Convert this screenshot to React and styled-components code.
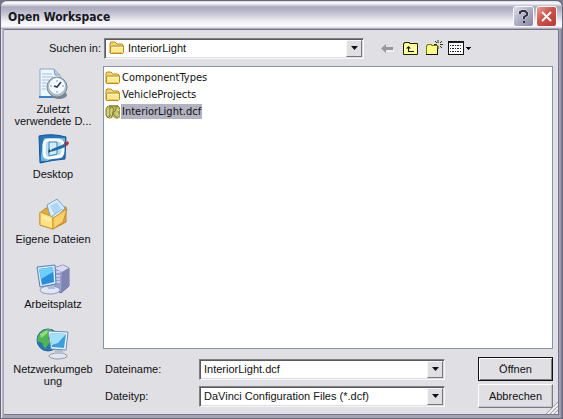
import React from "react";
import styled, { createGlobalStyle } from "styled-components";

const GlobalStyle = createGlobalStyle`
  *, *::before, *::after { box-sizing: border-box; }
  body { margin: 0; background: #77768a; }
  button, input, select { font: inherit; color: inherit; margin: 0; }
`;

const Dialog = styled.main`
  display: flex;
  flex-direction: column;
  min-height: 100vh;
  padding: 0 3px 3px;
  border: 1px solid #696879;
  border-radius: 7px 7px 0 0;
  background: linear-gradient(90deg, #f4f4f8 0, #a5a4b7 2px, #a5a4b7 calc(100% - 2px), #77768c 100%);
  font: 11px/13px "Liberation Sans", Arial, sans-serif;
  color: #111;
`;

const TitleBar = styled.header`
  display: flex;
  align-items: center;
  gap: 2px;
  height: 28px;
  margin: 0 -3px;
  padding: 5px 5px 2px 7px;
  border-radius: 6px 6px 0 0;
  background: linear-gradient(#d5d5df 0, #ffffff 2px, #d4d4df 4px, #aaa9bd 6px, #b5b4c6 9px, #cdccd9 14px, #eeeef4 20px, #fdfdff 25px, #d0cfdc 27px, #8b8a9d 28px);
`;

const Title = styled.h1`
  flex: 1;
  margin: 0;
  font: bold 12px/16px "DejaVu Sans Condensed", "DejaVu Sans", sans-serif;
  font-stretch: condensed;
  color: #17171f;
`;

const CaptionButton = styled.button`
  display: grid;
  place-items: center;
  width: 21px;
  height: 21px;
  padding: 0;
  border: 1px solid #f8f8ff;
  border-radius: 3px;
  background: ${(p) =>
    p.$close
      ? "linear-gradient(135deg, #e9a198, #cf5148 45%, #b93834)"
      : "linear-gradient(135deg, #dddde9, #a9a9c0 55%, #8787a3)"};
`;

const Body = styled.form`
  flex: 1;
  display: grid;
  grid-template-columns: 99px minmax(0, 1fr);
  grid-template-rows: 36px minmax(0, 1fr) auto;
  position: relative;
  padding-right: 5px;
  border: 1px solid #777689;
  border-width: 1px 1px 1px 0;
  background: #e0dfe4;
`;

const Lookup = styled.div`
  grid-column: 1 / -1;
  display: flex;
  align-items: center;
  padding-left: 45px;
`;

const LookupLabel = styled.label`
  flex: none;
  width: 55px;
`;

const Combo = styled.div`
  display: flex;
  align-items: center;
  flex: 1;
  position: relative;
  min-width: 0;
  max-width: ${(p) => p.$max || "none"};
  height: 21px;
  border: 1px solid;
  border-color: #807f88 #f8f8fa #f8f8fa #807f88;
  box-shadow: inset 1px 1px #5a5960, inset -1px -1px #dddce2;
  background: #fff;
`;

const ComboIcon = styled.span`
  position: absolute;
  left: 4px;
  top: 1px;
  width: 16px;
  height: 16px;
  pointer-events: none;
`;

const Select = styled.select`
  appearance: none;
  flex: 1;
  min-width: 0;
  height: 17px;
  padding: 0 20px 0 ${(p) => (p.$icon ? "23px" : "4px")};
  border: 0;
  background: transparent;
  outline: 0;
`;

const Input = styled.input`
  flex: 1;
  min-width: 0;
  height: 17px;
  padding: 0 4px;
  border: 0;
  background: transparent;
  outline: 0;
`;

const DropFace = styled.span`
  position: absolute;
  right: 1px;
  top: 1px;
  display: grid;
  place-items: center;
  width: 16px;
  height: 17px;
  padding: 0;
  border: 1px solid;
  border-color: #f7f7fa #77767d #77767d #f7f7fa;
  background: #e0dfe4;
  pointer-events: none;
`;

const DropButton = styled(DropFace)`
  pointer-events: auto;
`;

const Tools = styled.div`
  display: flex;
  align-items: center;
  gap: 2px;
  margin-left: 13px;
`;

const ToolButton = styled.button`
  display: grid;
  place-items: center;
  width: ${(p) => (p.$wide ? "28px" : "21px")};
  height: 20px;
  padding: 0;
  border: 0;
  background: none;
`;

const Places = styled.nav`
  grid-row: 2 / 4;
  display: flex;
  flex-direction: column;
  padding: 2px 5px 0 4px;
`;

const Place = styled.button`
  display: flex;
  flex-direction: column;
  align-items: center;
  gap: 3px;
  height: 65px;
  padding: 0;
  border: 0;
  background: none;
  line-height: 12px;
  text-align: center;
`;

const PlaceLabel = styled.span`
  white-space: pre-line;
`;

const FileList = styled.ul`
  margin: 0;
  padding: 2px 1px;
  list-style: none;
  border: 1px solid #8296a8;
  background: #fff;
`;

const FileRow = styled.li`
  display: flex;
  height: 17px;
`;

const FileButton = styled.button`
  display: flex;
  align-items: center;
  padding: 0;
  border: 0;
  background: none;
  font: 11px/15px "DejaVu Sans Condensed", "DejaVu Sans", sans-serif;
  font-stretch: condensed;
`;

const FileName = styled.span`
  padding: 0 1px;
  background: ${(p) => (p.$selected ? "#b3b2c1" : "transparent")};
`;

const Fields = styled.div`
  display: grid;
  grid-template-columns: 96px minmax(0, 1fr) 75px;
  grid-auto-rows: 22px;
  row-gap: 5px;
  align-items: center;
  padding: 9px 0 7px;
`;

const FieldLabel = styled.label`
  padding-left: 2px;
`;

const ActionButton = styled.button`
  height: 24px;
  padding: 0;
  border: 1px solid;
  border-color: ${(p) => (p.$primary ? "#111" : "#fff #7b7a82 #7b7a82 #fff")};
  box-shadow: ${(p) => (p.$primary ? "inset 1px 1px #fff, inset -1px -1px #7b7a82" : "inset -1px -1px #c3c2ca")};
  background: #e0dfe4;
`;

const FieldCombo = styled(Combo)`
  margin-right: 33px;
`;

const Grip = styled.svg`
  position: absolute;
  right: 0;
  bottom: 0;
`;

const FolderIcon = () => (
  <svg width="16" height="16" viewBox="0 0 16 16" aria-hidden="true">
    <path d="M1 13V3l1-1h4l2 2h5l1 1v2" fill="#f3d46e" stroke="#b78c20" />
    <path d="M1.500 13.500V7l1-1h12v6.500l-1 1z" fill="#ffe98d" stroke="#b98d20" />
    <path d="M3 7.500h11" stroke="#fff9c8" />
    <path d="M3 12.500h10" stroke="#eec85b" />
  </svg>
);

const ConfigIcon = () => (
  <svg width="16" height="16" viewBox="0 0 16 16" aria-hidden="true">
    <path d="M4 1h8l3 3v10l-4 1-3-2-3 2-4-2V4z" fill="#c6c16c" />
    <path d="M3 2 1 5v6l2 3M5 2v10l-2 2M6 3c3 0 3 3 2 5s2 5 5 6M13 2c-4 1-1 4-3 5s-2 4-4 7M4 2h9l2 3M14 6v7" fill="none" stroke="#77762a" />
    <path d="M3 5v6M6 5v6m6-6 2 2m-2 2 2 3" stroke="#e6e28a" />
  </svg>
);

const Arrow = () => (
  <svg width="7" height="4" viewBox="0 0 7 4" aria-hidden="true">
    <path d="M0 0h7L3.500 4z" fill="#111" />
  </svg>
);

const RecentIcon = () => (
  <svg width="32" height="32" viewBox="0 0 32 32" aria-hidden="true">
    <path d="M3 1h14l6 6v22H3z" fill="#eef6ff" stroke="#8aa7cf" />
    <path d="m17 1 1 6h5" fill="#b4cceb" stroke="#7d9dc5" />
    <path d="M5 6h10M5 9h11M5 12h7M5 15h5M5 18h4M5 21h4" stroke="#a6bddb" />
    <path d="M2 28h21v2H2z" fill="#3a82c7" />
    <ellipse cx="22" cy="27" rx="8" ry="4" fill="#788497" />
    <circle cx="20" cy="19" r="10" fill="#a9bdcd" stroke="#718799" />
    <circle cx="20" cy="18" r="7.500" fill="#f4faff" stroke="#fff" />
    <path d="M20 12v2m0 9v2m-7-7h2m10 0h2" stroke="#7899b1" />
    <path d="m17 18 3 1 4-5" fill="none" stroke="#233c54" strokeWidth="1.500" />
  </svg>
);

const DesktopIcon = () => (
  <svg width="32" height="32" viewBox="0 0 32 32" aria-hidden="true">
    <path d="M2 3q13-3 27 1l-1 22q-13 1-25 4z" fill="#2676b8" stroke="#16569b" />
    <path d="M4 23 7 5h21v4L11 28H4z" fill="#65b5e6" />
    <path d="M11 7h9q6 0 6 5v6q0 6-6 6l-8 1q-5 0-5-5v-8q0-5 4-5z" fill="#b9dff5" stroke="#fff" strokeWidth="3" />
    <path d="M12 9h8v12l-8 2z" fill="#d5edfa" stroke="#3785b6" />
    <path d="m15 16 10-4 5-3 1 3-5 3-9 3-4 1z" fill="#286da0" />
    <path d="m27 10 4-2 1 3-4 2z" fill="#a73542" />
    <path d="m14 18-3 2 1-4z" fill="#173f69" />
  </svg>
);

const DocumentsIcon = () => (
  <svg width="32" height="32" viewBox="0 0 32 32" aria-hidden="true">
    <path d="m3 15 6-5 20-1v15L16 31 3 27z" fill="#e1ac36" stroke="#bf8421" />
    <path d="m10 7 10-6 8 9-13 15z" fill="#d8edff" stroke="#75a3ce" />
    <path d="m13 8 7-4 4 6-7 6z" fill="#afd7f5" />
    <path d="M15 18l10-7" stroke="#7eabcf" />
    <path d="m3 14 13 5v12L3 27z" fill="#ffe484" stroke="#c99830" />
    <path d="m16 20 14-9-4 13-10 7z" fill="#f9d06a" stroke="#c8922e" />
    <path d="m5 17 9 4v3l-9-4z" fill="#fff4be" opacity=".7" />
  </svg>
);

const ComputerIcon = () => (
  <svg width="34" height="32" viewBox="0 0 34 32" aria-hidden="true">
    <path d="m18 5 9-3 6 3v18l-8 7-7-4z" fill="#9aa0ce" stroke="#646999" />
    <path d="m27 2 6 3-7 4-8-4z" fill="#d8daf0" />
    <path d="m26 9 7-4v18l-8 7z" fill="#7f84b2" />
    <path d="M20 9h4m-4 4h4m-4 3h4m-4 3h4" stroke="#f6f6ff" />
    <ellipse cx="14" cy="27" rx="10" ry="4" fill="#dfe6f5" stroke="#8d9bbb" />
    <path d="m10 20 8-1 1 7h-7z" fill="#adbbd9" />
    <path d="m1 4 18-2 1 19-16 3z" fill="#d8edff" stroke="#597db3" />
    <path d="m3 6 14-2 1 15-12 3z" fill="#278ddc" />
    <path d="m3 6 14-2v5L5 16z" fill="#72cdfa" />
  </svg>
);

const NetworkIcon = () => (
  <svg width="34" height="32" viewBox="0 0 34 32" aria-hidden="true">
    <circle cx="12" cy="12" r="11" fill="#2675b4" stroke="#2567a0" />
    <path d="M2 8q5-8 13-7l2 4-5 5 2 4-5 7-3-6-5-2z" fill="#4fb553" />
    <path d="m4 6 7-4 2 2-5 4-3 2z" fill="#9bd873" />
    <ellipse cx="22" cy="28" rx="9" ry="3" fill="#e1e5ee" stroke="#9299a8" />
    <path d="m18 20 8-1 2 7h-9z" fill="#b5bfd2" />
    <path d="m12 3 20 1-2 18-15-1z" fill="#e7f5ff" stroke="#6c8db4" />
    <path d="m14 5 16 1-2 14-12-1z" fill="#3c9ddd" />
    <path d="m14 5 16 1-8 9-6 2z" fill="#a2e1fa" />
  </svg>
);

const BackIcon = () => (
  <svg width="13" height="11" viewBox="0 0 13 11" aria-hidden="true">
    <path d="M0 5.500 5 1v3h7v3H5v3z" fill="#98979f" />
    <path d="M5 8h8" stroke="#fff" />
  </svg>
);

const UpIcon = () => (
  <svg width="16" height="15" viewBox="0 0 16 15" aria-hidden="true">
    <path d="M.500 13.500v-11h1v-1h5v1h8v11z" fill="#ffff99" stroke="#222200" />
    <path d="M3 7.500 5.500 5 8 7.500H6V10h5v1H5V7.500z" fill="#111" />
  </svg>
);

const NewIcon = () => (
  <svg width="18" height="16" viewBox="0 0 18 16" aria-hidden="true">
    <path d="M1.500 14.500v-9h1v-1h4v1h6v9z" fill="#ffff87" stroke="#777700" />
    <path d="M1 14.500h12m-.500 0v-6" stroke="#111" />
    <path d="M13 0v3m0 3v3M9 4.500h3m3 0h3M10 1l2 2m3 3 2 2m0-7-2 2" stroke="#333300" />
  </svg>
);

const ViewIcon = () => (
  <svg width="24" height="14" viewBox="0 0 24 14" aria-hidden="true" shapeRendering="crispEdges">
    <path d="M.500.500h15v13H.500z" fill="#fff" stroke="#111" />
    <path d="M1 1h14v1H1z" fill="#222" />
    <path d="M2 4.500h12M2 7.500h12M2 10.500h12" stroke="#222" strokeDasharray="1 1 2 1" />
    <path d="M18 6h5l-2.500 3z" fill="#111" />
  </svg>
);

const places = [
  ["Zuletzt\nverwendete D...", RecentIcon],
  ["Desktop", DesktopIcon],
  ["Eigene Dateien", DocumentsIcon],
  ["Arbeitsplatz", ComputerIcon],
  ["Netzwerkumgeb\nung", NetworkIcon],
];

const files = [
  ["ComponentTypes", FolderIcon],
  ["VehicleProjects", FolderIcon],
  ["InteriorLight.dcf", ConfigIcon, true],
];

export default function App() {
  return (
    <>
      <GlobalStyle />
      <Dialog>
        <TitleBar>
          <Title>Open Workspace</Title>
          <CaptionButton type="button" aria-label="Hilfe">
            <svg width="13" height="15" viewBox="0 0 13 15" aria-hidden="true">
              <path d="M3 5V3l2-1h3l2 2v2L7 8v2" fill="none" stroke="#fff" strokeWidth="3" opacity=".6" />
              <path d="M3 5V3l2-1h3l2 2v2L7 8v2M7 12v2" fill="none" stroke="#30303e" strokeWidth="2" />
            </svg>
          </CaptionButton>
          <CaptionButton type="button" $close aria-label="Schließen">
            <svg width="13" height="13" viewBox="0 0 13 13" aria-hidden="true">
              <path d="m2 2 9 9m0-9-9 9" stroke="#fff" strokeWidth="2" />
            </svg>
          </CaptionButton>
        </TitleBar>
        <Body onSubmit={(e) => e.preventDefault()}>
          <Lookup>
            <LookupLabel htmlFor="folder">Suchen in:</LookupLabel>
            <Combo $max="260px">
              <ComboIcon><FolderIcon /></ComboIcon>
              <Select id="folder" $icon defaultValue="InteriorLight">
                <option>InteriorLight</option>
              </Select>
              <DropFace><Arrow /></DropFace>
            </Combo>
            <Tools>
              <ToolButton type="button" disabled aria-label="Zurück"><BackIcon /></ToolButton>
              <ToolButton type="button" aria-label="Übergeordneter Ordner"><UpIcon /></ToolButton>
              <ToolButton type="button" aria-label="Neuer Ordner"><NewIcon /></ToolButton>
              <ToolButton type="button" $wide aria-label="Ansicht"><ViewIcon /></ToolButton>
            </Tools>
          </Lookup>
          <Places>
            {places.map(([label, Icon]) => (
              <Place type="button" key={label}>
                <Icon />
                <PlaceLabel>{label}</PlaceLabel>
              </Place>
            ))}
          </Places>
          <FileList>
            {files.map(([name, Icon, selected]) => (
              <FileRow key={name}>
                <FileButton type="button">
                  <Icon />
                  <FileName $selected={selected}>{name}</FileName>
                </FileButton>
              </FileRow>
            ))}
          </FileList>
          <Fields>
            <FieldLabel htmlFor="filename">Dateiname:</FieldLabel>
            <FieldCombo>
              <Input id="filename" defaultValue="InteriorLight.dcf" />
              <DropButton as="button" type="button" aria-label="Dateinamen anzeigen"><Arrow /></DropButton>
            </FieldCombo>
            <ActionButton type="submit" $primary>Öffnen</ActionButton>
            <FieldLabel htmlFor="filetype">Dateityp:</FieldLabel>
            <FieldCombo>
              <Select id="filetype" defaultValue="DaVinci Configuration Files (*.dcf)">
                <option>DaVinci Configuration Files (*.dcf)</option>
              </Select>
              <DropFace><Arrow /></DropFace>
            </FieldCombo>
            <ActionButton type="button">Abbrechen</ActionButton>
          </Fields>
          <Grip width="12" height="12" viewBox="0 0 12 12" aria-hidden="true">
            <path d="M0 12 12 0M4 12l8-8M8 12l4-4" stroke="#a5a4ae" />
            <path d="m2 12 10-10M6 12l6-6M10 12l2-2" stroke="#fff" />
          </Grip>
        </Body>
      </Dialog>
    </>
  );
}
